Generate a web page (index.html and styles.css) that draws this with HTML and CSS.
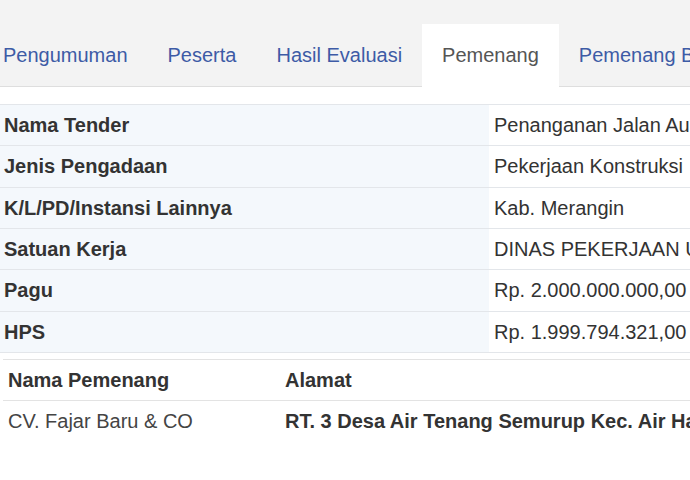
FILE: index.html
```html
<!DOCTYPE html>
<html lang="id">
<head>
<meta charset="utf-8">
<title>Pemenang</title>
<link rel="stylesheet" href="styles.css">
</head>
<body>
<div class="page">
  <ul class="tabs">
    <li class="tab"><a href="#">Pengumuman</a></li>
    <li class="tab"><a href="#">Peserta</a></li>
    <li class="tab"><a href="#">Hasil Evaluasi</a></li>
    <li class="tab active"><a href="#">Pemenang</a></li>
    <li class="tab"><a href="#">Pemenang Berkontrak</a></li>
  </ul>
  <div class="content">
    <table class="info">
      <tr><th>Nama Tender</th><td>Penanganan Jalan Aur Berduri - Semurup Kecamatan Air Hitam</td></tr>
      <tr><th>Jenis Pengadaan</th><td>Pekerjaan Konstruksi</td></tr>
      <tr><th>K/L/PD/Instansi Lainnya</th><td>Kab. Merangin</td></tr>
      <tr><th>Satuan Kerja</th><td>DINAS PEKERJAAN UMUM DAN PENATAAN RUANG</td></tr>
      <tr><th>Pagu</th><td>Rp. 2.000.000.000,00</td></tr>
      <tr><th>HPS</th><td>Rp. 1.999.794.321,00</td></tr>
    </table>
    <table class="winners">
      <thead>
        <tr><th class="col-name">Nama Pemenang</th><th>Alamat</th></tr>
      </thead>
      <tbody>
        <tr><td class="col-name">CV. Fajar Baru &amp; CO</td><td class="addr">RT. 3 Desa Air Tenang Semurup Kec. Air Hangat Timur</td></tr>
      </tbody>
    </table>
  </div>
</div>
</body>
</html>
```
FILE: styles.css
```css
html, body {
  margin: 0;
  padding: 0;
  background: #ffffff;
  overflow: hidden;
}
body {
  font-family: "Liberation Sans", Arial, sans-serif;
  font-size: 20px;
  color: #333333;
}
.page {
  width: 1100px;
}
.tabs {
  list-style: none;
  margin: 0;
  padding: 24px 0 0 0;
  display: flex;
  background: #f3f3f3;
  border-bottom: 1px solid #dedede;
}
.tabs .tab:first-child {
  margin-left: -17px;
}
.tab a {
  display: block;
  padding: 0 20px 1px;
  margin-bottom: -1px;
  line-height: 62px;
  color: #3d5ba6;
  text-decoration: none;
  white-space: nowrap;
}
.tab.active a {
  background: #ffffff;
  color: #555555;
}
.content {
  padding-top: 17px;
}
table {
  border-collapse: collapse;
  border-spacing: 0;
}
.info {
  width: 1100px;
  margin-left: -1px;
  border-bottom: 1px solid #e3e6ea;
}
.info th, .info td {
  border-top: 1px solid #e3e6ea;
  padding: 8px 5px;
  line-height: 24.33px;
  text-align: left;
  vertical-align: middle;
  white-space: nowrap;
}
.info th {
  width: 480px;
  background: #f4f8fc;
  font-weight: bold;
  color: #333333;
}
.info td {
  color: #333333;
}
.winners {
  width: 1000px;
  margin: 6px 0 0 3px;
}
.winners th, .winners td {
  border-top: 1px solid #e3e3e3;
  padding: 8px 5px;
  line-height: 24px;
  text-align: left;
  white-space: nowrap;
}
.winners th {
  font-weight: bold;
  color: #333333;
}
.winners .col-name {
  width: 267px;
}
.winners td {
  color: #444444;
}
.winners td.addr {
  font-weight: bold;
  color: #333333;
}
```
